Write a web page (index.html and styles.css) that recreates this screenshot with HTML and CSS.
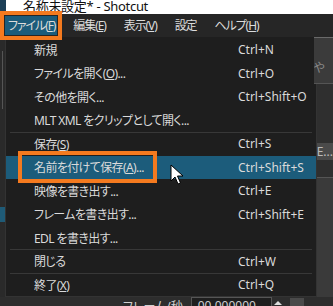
FILE: index.html
```html
<!DOCTYPE html>
<html lang="ja">
<head>
  <meta charset="UTF-8" />
  <title>名称未設定* - Shotcut</title>
  <link rel="stylesheet" href="styles.css">
</head>
<body>
  <div class="window">
    <div class="titlebar">
      <span class="app-icon"></span>
      <span class="title">名称未設定* - Shotcut</span>
    </div>

    <div class="menubar">
      <span class="menu-item active">ファイル(<u>F</u>)</span>
      <span class="menu-item">編集(<u>E</u>)</span>
      <span class="menu-item">表示(<u>V</u>)</span>
      <span class="menu-item">設定</span>
      <span class="menu-item">ヘルプ(<u>H</u>)</span>
    </div>

    <div class="workspace">
      <div class="side side-left">
        <div class="side-line"></div>
        <div class="side-tab"></div>
      </div>

      <div class="dropdown">
        <div class="row"><span class="label">新規</span><span>Ctrl+N</span></div>
        <div class="row"><span class="label">ファイルを開く(<u>O</u>)...</span><span>Ctrl+O</span></div>
        <div class="row"><span class="label">その他を開く...</span><span>Ctrl+Shift+O</span></div>
        <div class="row"><span class="label">MLT XML をクリップとして開く...</span><span></span></div>
        <div class="sep"></div>
        <div class="row"><span class="label">保存(<u>S</u>)</span><span>Ctrl+S</span></div>
        <div class="row selected"><span class="label"><span class="mark">名前を付けて保存(<u>A</u>)...</span></span><span>Ctrl+Shift+S</span></div>
        <div class="row"><span class="label">映像を書き出す...</span><span>Ctrl+E</span></div>
        <div class="row"><span class="label">フレームを書き出す...</span><span>Ctrl+Shift+E</span></div>
        <div class="row"><span class="label">EDL を書き出す...</span><span></span></div>
        <div class="sep"></div>
        <div class="row"><span class="label">閉じる</span><span>Ctrl+W</span></div>
        <div class="sep"></div>
        <div class="row"><span class="label">終了(<u>X</u>)</span><span>Ctrl+Q</span></div>
      </div>

      <div class="side side-right">
        <div class="panel-top">やり</div>
        <div class="panel-gap"></div>
        <div class="panel-button">E...</div>
        <div class="panel-gap short"></div>
        <div class="panel-rest"></div>
      </div>
    </div>

    <div class="statusbar">
      <span class="fps-label">フレーム/秒</span>
      <span class="fps-input">00.000000</span>
      <span class="spin up"></span>
      <span class="spin minus"></span>
    </div>
  </div>

  <svg class="cursor" width="14" height="21" viewBox="0 0 14 21">
    <path d="M1 1 L1 17 L5 13 L8 20 L10.5 19 L7.5 12 L13 12 Z" fill="#fff" stroke="#000" stroke-width="1"/>
  </svg>
</body>
</html>
```

FILE: styles.css
```css
body {
  margin: 0;
  background-color: #2b2b2b;
  font-family: "Noto Sans", "Noto Sans CJK JP", sans-serif;
  font-size: 12px;
  font-feature-settings: "palt";
  color: #dadada;
}

u {
  text-decoration: underline;
  text-underline-offset: 1px;
}

.window {
  width: 333px;
  height: 306px;
  overflow: hidden;
  display: flex;
  flex-direction: column;
}

.titlebar {
  height: 14px;
  flex: none;
  background: #fff;
  display: flex;
  align-items: flex-start;
}

.app-icon {
  width: 6px;
  height: 12px;
  background: #1d3f57;
}

.title {
  margin-left: 17px;
  color: #111;
  font-size: 13px;
  line-height: 13px;
  letter-spacing: -0.3px;
}

.menubar {
  height: 23px;
  flex: none;
  background: #262626;
  display: flex;
  align-items: center;
  gap: 13px;
  padding-left: 5px;
}

.menu-item {
  padding: 0 2px 0 3px;
  line-height: 19px;
  color: #dcdcdc;
  letter-spacing: -1.1px;
}

.menu-item.active {
  position: relative;
  z-index: 2;
  background: #1c5c7b;
  outline: 4px solid #f47a1f;
  outline-offset: 1px;
}

.workspace {
  height: 260px;
  flex: none;
  display: flex;
}

.side-left {
  width: 5px;
  background: #2a2a2a;
  display: flex;
  flex-direction: column;
}

.side-line {
  margin: 14px 0 0 2px;
  width: 1px;
  height: 58px;
  background: #555;
}

.side-tab {
  margin-top: 98px;
  height: 15px;
  background: #1f5b77;
}

.dropdown {
  width: 313px;
  box-sizing: border-box;
  height: 260px;
  background: #1e1e1e;
  border: 1px solid #333;
  border-top: none;
  padding-top: 1px;
}

.row {
  height: 23.5px;
  display: grid;
  grid-template-columns: 204px 1fr;
  align-items: center;
  padding-left: 28px;
  white-space: nowrap;
}

.label {
  letter-spacing: -0.6px;
}

.row.selected {
  background: #1c5c7b;
}

.mark {
  display: inline-block;
  padding: 3px 9px 3px 12px;
  margin: -3px -9px -3px -12px;
  outline: 4px solid #f47a1f;
}

.sep {
  height: 1px;
  margin: -0.5px 4px;
  background: #383838;
}

.side-right {
  flex: 1;
  display: flex;
  flex-direction: column;
  background: #333;
}

.panel-top {
  height: 45px;
  border-top: 1px solid #6a6a6a;
  border-bottom: 1px solid #555;
  background: #3b3b3b;
  color: #8a8a8a;
  line-height: 60px;
  margin-left: -3px;
  overflow: hidden;
}

.panel-gap {
  height: 59px;
  background: #2f2f2f;
}

.panel-gap.short {
  height: 17px;
  border-bottom: 1px solid #555;
}

.panel-button {
  height: 17px;
  background: #4a4a4a;
  color: #bbb;
  line-height: 17px;
}

.panel-rest {
  flex: 1;
  background: #3a3a3a;
}

.statusbar {
  flex: 1;
  display: flex;
  align-items: flex-start;
  background: #2d2d2d;
  overflow: hidden;
}

.fps-label {
  margin: 3px 0 0 123px;
  line-height: 14px;
  color: #d0d0d0;
}

.fps-input {
  margin-left: 8px;
  width: 81px;
  height: 14px;
  box-sizing: border-box;
  background: #1e1e1e;
  border: 1px solid #555;
  padding-left: 6px;
  line-height: 16px;
  color: #d0d0d0;
}

.spin {
  margin-top: 1px;
  width: 11px;
  height: 12px;
  background: #555;
}

.spin.up {
  width: 0;
  height: 0;
  margin: 4px 2px 0 2px;
  border-left: 4px solid transparent;
  border-right: 4px solid transparent;
  border-bottom: 4px solid #ddd;
  background: none;
}

.spin.minus {
  margin-left: 6px;
  width: 14px;
  background: #4a4a4a;
}

.cursor {
  position: absolute;
  left: 170px;
  top: 164px;
}
```
